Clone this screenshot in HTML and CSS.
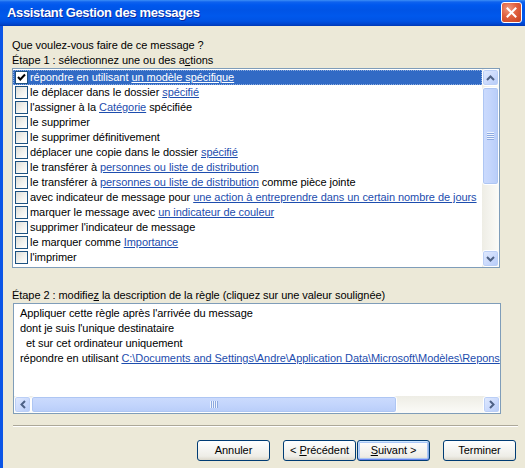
FILE: index.html
```html
<!DOCTYPE html>
<html lang="fr">
<head>
<meta charset="utf-8">
<title>Assistant Gestion des messages</title>
<link rel="stylesheet" href="styles.css">
</head>
<body>
<div class="window">
  <div class="titlebar">
    <span class="title">Assistant Gestion des messages</span>
    <div class="close">
      <svg width="11" height="11" viewBox="0 0 11 11"><path d="M1.5 1.5 L9.5 9.5 M9.5 1.5 L1.5 9.5" stroke="#fff" stroke-width="2" stroke-linecap="square"/></svg>
    </div>
  </div>
  <div class="body">
    <p class="label first">Que voulez-vous faire de ce message ?</p>
    <p class="label">Étape 1 : sélectionnez une ou des a<u>c</u>tions</p>
    <div class="listbox">
      <div class="rows">
        <div class="row selected"><span class="cb"><svg width="11" height="11" viewBox="0 0 11 11"><path d="M2 5 L4.3 7.5 L9 2.5" fill="none" stroke="#000" stroke-width="2"/></svg></span><span class="txt">répondre en utilisant <a>un modèle spécifique</a></span></div>
        <div class="row"><span class="cb"></span><span class="txt">le déplacer dans le dossier <a>spécifié</a></span></div>
        <div class="row"><span class="cb"></span><span class="txt">l'assigner à la <a>Catégorie</a> spécifiée</span></div>
        <div class="row"><span class="cb"></span><span class="txt">le supprimer</span></div>
        <div class="row"><span class="cb"></span><span class="txt">le supprimer définitivement</span></div>
        <div class="row"><span class="cb"></span><span class="txt">déplacer une copie dans le dossier <a>spécifié</a></span></div>
        <div class="row"><span class="cb"></span><span class="txt">le transférer à <a>personnes ou liste de distribution</a></span></div>
        <div class="row"><span class="cb"></span><span class="txt">le transférer à <a>personnes ou liste de distribution</a> comme pièce jointe</span></div>
        <div class="row"><span class="cb"></span><span class="txt">avec indicateur de message pour <a>une action à entreprendre dans un certain nombre de jours</a></span></div>
        <div class="row"><span class="cb"></span><span class="txt">marquer le message avec <a>un indicateur de couleur</a></span></div>
        <div class="row"><span class="cb"></span><span class="txt">supprimer l'indicateur de message</span></div>
        <div class="row"><span class="cb"></span><span class="txt">le marquer comme <a>Importance</a></span></div>
        <div class="row"><span class="cb"></span><span class="txt">l'imprimer</span></div>
      </div>
      <div class="vscroll">
        <div class="sbtn"><svg width="9" height="6" viewBox="0 0 9 6"><path d="M1 5 L4.5 1.5 L8 5" fill="none" stroke="#4D6185" stroke-width="2"/></svg></div>
        <div class="vtrack"><div class="vthumb"><span class="grip-v"></span></div></div>
        <div class="sbtn"><svg width="9" height="6" viewBox="0 0 9 6"><path d="M1 1 L4.5 4.5 L8 1" fill="none" stroke="#4D6185" stroke-width="2"/></svg></div>
      </div>
    </div>
    <p class="label step2">Étape 2 : modifie<u>z</u> la description de la règle (cliquez sur une valeur soulignée)</p>
    <div class="descbox">
      <div class="desc">
        <div class="line">Appliquer cette règle après l'arrivée du message</div>
        <div class="line">dont je suis l'unique destinataire</div>
        <div class="line indent">et sur cet ordinateur uniquement</div>
        <div class="line">répondre en utilisant <a>C:\Documents and Settings\Andre\Application Data\Microsoft\Modèles\Repons</a></div>
      </div>
      <div class="hscroll">
        <div class="sbtn"><svg width="6" height="9" viewBox="0 0 6 9"><path d="M5 1 L1.5 4.5 L5 8" fill="none" stroke="#4D6185" stroke-width="2"/></svg></div>
        <div class="htrack"><div class="hthumb"><span class="grip-h"></span></div></div>
        <div class="sbtn"><svg width="6" height="9" viewBox="0 0 6 9"><path d="M1 1 L4.5 4.5 L1 8" fill="none" stroke="#4D6185" stroke-width="2"/></svg></div>
      </div>
    </div>
    <div class="separator"></div>
    <div class="buttons">
      <button class="btn cancel">Annuler</button>
      <button class="btn prev">&lt; <u>P</u>récédent</button>
      <button class="btn next default"><u>S</u>uivant &gt;</button>
      <button class="btn finish">Terminer</button>
    </div>
  </div>
</div>
</body>
</html>
```

FILE: styles.css
```css
* { box-sizing: border-box; }

html, body {
  margin: 0;
  padding: 0;
}

body {
  width: 525px;
  height: 468px;
  overflow: hidden;
  background: #ECE9D8;
  font-family: "Liberation Sans", Arial, sans-serif;
  font-size: 11px;
  letter-spacing: -0.06px;
  color: #000;
}

.window {
  height: 468px;
  display: flex;
  flex-direction: column;
}

.titlebar {
  height: 26px;
  flex: none;
  display: flex;
  align-items: center;
  justify-content: space-between;
  padding: 0 3px 1px 7px;
  background: linear-gradient(to bottom,
    #3D8FF6 0px, #0F62EE 2px, #0058EE 5px, #0054E6 10px,
    #0058EC 16px, #0053E4 21px, #0046D0 24px, #0038B4 26px);
}

.title {
  color: #fff;
  font-weight: bold;
  font-size: 13px;
  letter-spacing: -0.35px;
  text-shadow: 1px 1px 0 #0A2A9E;
}

.close {
  width: 21px;
  height: 21px;
  border: 1px solid #fff;
  border-radius: 3px;
  background: radial-gradient(circle at 35% 30%, #F09A80 0%, #E0603E 45%, #C5401E 100%);
  display: flex;
  align-items: center;
  justify-content: center;
}

.body {
  flex: 1;
  border-left: 3px solid #0B55E6;
  padding: 12px 0 0 9px;
}

.label {
  margin: 0;
  line-height: 15px;
  height: 15px;
  white-space: nowrap;
}

a {
  color: #1D4DAE;
  text-decoration: underline;
}

/* list of actions */
.listbox {
  width: 488px;
  height: 200px;
  border: 1px solid #7F9DB9;
  background: #fff;
  display: flex;
}

.rows {
  flex: 1;
  padding-top: 1px;
  overflow: hidden;
}

.row {
  height: 15px;
  display: flex;
  align-items: center;
  padding-left: 2px;
  white-space: nowrap;
}

.row.selected {
  background: #316AC5;
  color: #fff;
  outline: 1px dotted rgba(255, 255, 255, 0.45);
  outline-offset: -1px;
}

.row.selected a {
  color: #fff;
}

.cb {
  width: 13px;
  height: 13px;
  flex: none;
  border: 1px solid #1C5180;
  background: linear-gradient(135deg, #DCDCD7 0%, #F2F2EE 55%, #FFFFFF 100%);
  margin-right: 2px;
  display: flex;
  align-items: center;
  justify-content: center;
}

.row.selected .cb {
  background: #fff;
}

.txt {
  line-height: 15px;
}

/* scrollbars */
.vscroll {
  width: 17px;
  flex: none;
  display: flex;
  flex-direction: column;
  background: linear-gradient(to right, #EEEDE5, #FBFBF8);
}

.sbtn {
  width: 17px;
  height: 17px;
  flex: none;
  border: 1px solid #fff;
  border-radius: 3px;
  background: linear-gradient(135deg, #E2EBFE 0%, #C8D8FC 60%, #B4CAF7 100%);
  box-shadow: inset 0 0 0 1px #BBCFF6;
  display: flex;
  align-items: center;
  justify-content: center;
}

.vtrack {
  flex: 1;
  display: flex;
  flex-direction: column;
}

.vthumb {
  height: 98px;
  margin-top: 1px;
  border: 1px solid #fff;
  border-radius: 3px;
  background: linear-gradient(to right, #CCDBFD 0%, #C3D5FC 50%, #B8CDF9 100%);
  box-shadow: inset 0 0 0 1px #AEC6F3;
  display: flex;
  align-items: center;
  justify-content: center;
}

.grip-v {
  width: 7px;
  height: 8px;
  background: repeating-linear-gradient(to bottom, #EEF4FE 0px, #EEF4FE 1px, #8CA9E0 1px, #8CA9E0 2px);
}

.grip-h {
  width: 8px;
  height: 7px;
  background: repeating-linear-gradient(to right, #EEF4FE 0px, #EEF4FE 1px, #8CA9E0 1px, #8CA9E0 2px);
}

/* step 2 */
.label.step2 {
  margin-top: 20px;
}

.descbox {
  width: 488px;
  height: 111px;
  margin-left: 1px;
  border: 1px solid #7F9DB9;
  background: #fff;
  display: flex;
  flex-direction: column;
}

.desc {
  flex: 1;
  padding: 2px 0 0 6px;
  overflow: hidden;
  white-space: nowrap;
}

.line {
  height: 15px;
  line-height: 15px;
}

.line.indent {
  padding-left: 6px;
}

.hscroll {
  height: 17px;
  flex: none;
  display: flex;
  background: linear-gradient(to bottom, #EEEDE5, #FBFBF8);
}

.htrack {
  flex: 1;
  display: flex;
}

.hthumb {
  width: 366px;
  border: 1px solid #fff;
  border-radius: 3px;
  background: linear-gradient(to bottom, #CCDBFD 0%, #C3D5FC 50%, #B8CDF9 100%);
  box-shadow: inset 0 0 0 1px #AEC6F3;
  display: flex;
  align-items: center;
  justify-content: center;
}

/* separator and buttons */
.separator {
  margin-top: 11px;
  margin-left: 1px;
  width: 505px;
  height: 2px;
  border-top: 1px solid #ACA899;
  border-bottom: 1px solid #fff;
}

.buttons {
  display: flex;
  margin-top: 13px;
  padding-left: 185px;
}

.btn {
  width: 73px;
  height: 21px;
  padding: 0;
  border: 1px solid #003C74;
  border-radius: 3px;
  background: linear-gradient(to bottom, #FFFFFF 0%, #F6F6F3 40%, #EEEDE7 80%, #DCD8CC 100%);
  font-family: "Liberation Sans", Arial, sans-serif;
  font-size: 11px;
  letter-spacing: -0.06px;
  color: #000;
  line-height: 19px;
  text-align: center;
}

.btn.prev {
  margin-left: 13px;
}

.btn.next {
  margin-left: 1px;
}

.btn.finish {
  margin-left: 13px;
}

.btn.default {
  box-shadow: inset 0 1px 0 #CEE7FF, inset 0 -1px 0 #6982EE, inset 1px 0 0 #B8D3F9, inset -1px 0 0 #89ADE4, inset 0 0 0 2px #A9C6F5;
}
```
